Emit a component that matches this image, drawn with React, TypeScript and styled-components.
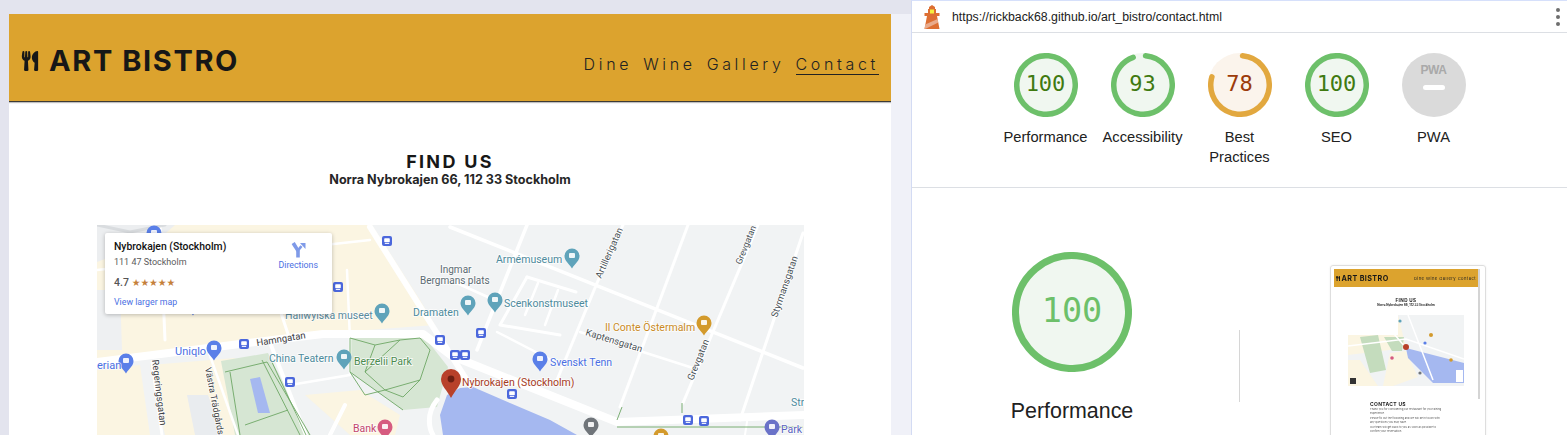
import React from "react";
import styled, { createGlobalStyle } from "styled-components";
import { FaUtensils } from "react-icons/fa";

const Global = createGlobalStyle`
  html, body { margin: 0; padding: 0; width: 1567px; height: 435px; overflow: hidden; background: #e3e4ee; }
  #root { width: 1567px; height: 435px; overflow: hidden; }
  * { box-sizing: border-box; }
`;

const Page = styled.div`
  display: flex;
  width: 1567px;
  height: 435px;
  overflow: hidden;
`;
const Browser = styled.div`
  display: flex;
  flex: 0 0 911px;
  height: 435px;
  padding: 14px 0 0 9px;
  background: #e3e4ee;
`;
const Site = styled.main`
  flex: 0 0 882px;
  background: #fff;
  overflow: hidden;
  font-family: Inter, "Liberation Sans", sans-serif;
`;
const Gutter = styled.div`
  flex: 1;
  background: #f0f1f8;
`;
const SiteHeader = styled.header`
  display: flex;
  justify-content: space-between;
  height: 88px;
  padding: 0 12px;
  background: #dca32e;
  border-bottom: 1px solid #3c3a35;
  box-shadow: 0 1px 1px rgba(0, 0, 0, 0.25);
`;
const Brand = styled.h1`
  display: flex;
  align-items: center;
  gap: 10px;
  margin: 0;
  height: 92px;
  font-size: 29px;
  font-weight: 700;
  letter-spacing: 1.6px;
  color: #171717;
  white-space: nowrap;
  svg { width: 18px; height: 20px; margin-top: 2px; }
`;
const Nav = styled.nav`
  display: flex;
  gap: 11px;
  align-items: flex-start;
  padding-top: 41px;
`;
const NavLink = styled.a<{ $active?: boolean }>`
  font-size: 16px;
  font-weight: 300;
  letter-spacing: 3.65px;
  line-height: 19px;
  height: 20px;
  color: #222;
  border-bottom: 1px solid ${(p) => (p.$active ? "#222" : "transparent")};
`;
const Intro = styled.section`
  padding-top: 50px;
  text-align: center;
  color: #171717;
  height: 123px;
`;
const Title = styled.h2`
  margin: 0;
  font-size: 18px;
  line-height: 20px;
  font-weight: 700;
  letter-spacing: 2.3px;
`;
const Address = styled.p`
  margin: 0;
  font-size: 12.6px;
  line-height: 16px;
  font-weight: 700;
  color: #262626;
`;
const MapFrame = styled.div`
  position: relative;
  width: 707px;
  height: 210px;
  margin-left: 88px;
  overflow: hidden;
  background: #f1f3f4;
  font-family: Roboto, "Liberation Sans", sans-serif;
`;
const MapSvg = styled.svg`
  display: block;
  width: 707px;
  height: 210px;
`;
const Label = styled.text<{ $c?: string; $s?: number; $w?: number }>`
  font-family: Roboto, "Liberation Sans", sans-serif;
  font-size: ${(p) => p.$s ?? 11}px;
  font-weight: ${(p) => p.$w ?? 400};
  fill: ${(p) => p.$c ?? "#5b6a72"};
  paint-order: stroke;
  stroke: rgba(255, 255, 255, 0.85);
  stroke-width: 1.5px;
`;
const InfoCard = styled.aside`
  position: absolute;
  left: 8px;
  top: 8px;
  width: 227px;
  height: 81px;
  padding: 7px 14px 0 9px;
  display: flex;
  justify-content: space-between;
  background: #fff;
  box-shadow: 0 1px 4px rgba(0, 0, 0, 0.25);
  border-radius: 2px;
`;
const Place = styled.div`
  display: flex;
  flex-direction: column;
`;
const PlaceName = styled.strong`
  font-size: 10.4px;
  line-height: 13px;
  font-weight: 500;
  color: #111;
`;
const PlaceAddress = styled.span`
  font-size: 9px;
  line-height: 12px;
  margin-top: 3px;
  color: #5b5b5b;
`;
const Rating = styled.div`
  display: flex;
  align-items: center;
  gap: 3px;
  margin-top: 7px;
  height: 14px;
  font-size: 10.5px;
  font-weight: 500;
  color: #555;
`;
const Stars = styled.span`
  font-size: 9.8px;
  letter-spacing: -0.15px;
  color: #c5803a;
  font-family: "DejaVu Sans", sans-serif;
`;
const LargerMap = styled.a`
  margin-top: 7px;
  font-size: 8.8px;
  line-height: 12px;
  color: #4a6fe3;
`;
const Directions = styled.a`
  display: flex;
  flex-direction: column;
  align-items: center;
  gap: 2px;
  margin-top: 2px;
  font-size: 8.8px;
  color: #4a6fe3;
  svg { width: 16px; height: 16px; }
`;

const Report = styled.aside`
  flex: 1;
  height: 435px;
  display: flex;
  flex-direction: column;
  background: #fff;
  border-left: 1px solid #d3dbf3;
  border-top: 1px solid #d6e0fb;
  font-family: "Liberation Sans", Arial, sans-serif;
  overflow: hidden;
`;
const TopBar = styled.div`
  display: flex;
  align-items: center;
  height: 32px;
  flex: none;
  padding: 0 7px 0 12px;
  border-bottom: 1px solid #dcdfe4;
  svg { flex: none; }
`;
const Url = styled.span`
  flex: 1;
  margin-left: 12px;
  font-size: 12.3px;
  color: #212121;
`;
const Dots = styled.div`
  display: flex;
  flex-direction: column;
  gap: 3px;
`;
const Dot = styled.i`
  display: block;
  width: 4px;
  height: 4px;
  border-radius: 50%;
  background: #6e6e6e;
`;
const Summary = styled.div`
  flex: 0 0 155px;
  display: flex;
  justify-content: center;
  padding-top: 20px;
  border-bottom: 1px solid #dcdfe4;
`;
const GaugeItem = styled.div`
  width: 97px;
  display: flex;
  flex-direction: column;
  align-items: center;
`;
const GaugeLabel = styled.span`
  margin-top: 10px;
  width: 90px;
  font-size: 14.7px;
  line-height: 20px;
  text-align: center;
  color: #212121;
`;
const GaugeBox = styled.div<{ $size: number }>`
  position: relative;
  width: ${(p) => p.$size}px;
  height: ${(p) => p.$size}px;
  svg { display: block; }
`;
const GaugeValue = styled.span<{ $size: number; $color: string }>`
  position: absolute;
  inset: 0;
  display: flex;
  align-items: center;
  justify-content: center;
  padding-bottom: ${(p) => p.$size * 0.1}px;
  font-family: "DejaVu Sans Mono", "Liberation Mono", monospace;
  font-size: ${(p) => p.$size}px;
  color: ${(p) => p.$color};
`;
const PwaBadge = styled.div`
  width: 64px;
  height: 64px;
  border-radius: 50%;
  background: #dadada;
  display: flex;
  flex-direction: column;
  align-items: center;
  padding-top: 11px;
`;
const PwaMark = styled.span`
  font-size: 12px;
  line-height: 13px;
  font-weight: 700;
  letter-spacing: -0.5px;
  color: #a9a9a9;
`;
const PwaDash = styled.i`
  display: block;
  width: 22px;
  height: 5px;
  margin-top: 8px;
  border-radius: 3px;
  background: #fff;
`;
const Detail = styled.div`
  flex: 1;
  display: flex;
  padding-top: 64px;
`;
const BigScore = styled.div`
  flex: 0 0 320px;
  display: flex;
  flex-direction: column;
  align-items: center;
`;
const BigLabel = styled.span`
  margin-top: 26px;
  font-size: 21.4px;
  line-height: 26px;
  color: #212121;
`;
const Divider = styled.div`
  flex: none;
  width: 1px;
  height: 72px;
  margin: 78px 0 0 7px;
  background: #d6d6d6;
`;
const Shot = styled.div`
  flex: none;
  width: 156px;
  height: 190px;
  margin: 13px 0 0 90px;
  padding: 3px 7px 0 3px;
  position: relative;
  border: 1px solid #dedede;
  border-radius: 3px;
  box-shadow: 0 0 2px rgba(0, 0, 0, 0.08);
  font-family: Inter, "Liberation Sans", sans-serif;
  color: #222;
  filter: blur(0.4px);
  &::after {
    content: "";
    position: absolute;
    right: 5px;
    top: 3px;
    width: 2px;
    height: 130px;
    background: #d4d4d4;
  }
`;
const ShotHeader = styled.div`
  height: 18px;
  padding: 0 2px;
  display: flex;
  align-items: center;
  justify-content: space-between;
  background: #dca32e;
`;
const ShotBrand = styled.b`
  display: flex;
  align-items: center;
  gap: 1.5px;
  font-size: 7.2px;
  letter-spacing: 0.4px;
  color: #171717;
  svg { width: 4px; height: 5px; }
`;
const ShotNav = styled.span`
  font-size: 4.1px;
  letter-spacing: 0.45px;
  margin-top: 1px;
  color: #222;
`;
const ShotCenter = styled.div`
  padding-top: 11px;
  text-align: center;
  font-weight: 700;
`;
const ShotTitle = styled.div`
  font-size: 4.6px;
  line-height: 5px;
  letter-spacing: 0.4px;
`;
const ShotSub = styled.div`
  font-size: 3px;
  line-height: 4px;
`;
const ShotMap = styled.svg`
  display: block;
  width: 116px;
  height: 71px;
  margin: 8px 0 0 14px;
`;
const ShotBody = styled.div`
  margin: 15px 0 0 36px;
  width: 72px;
`;
const ShotHeading = styled.div`
  font-size: 5px;
  line-height: 7px;
  font-weight: 700;
  letter-spacing: 0.3px;
`;
const ShotLine = styled.div`
  font-size: 2.7px;
  line-height: 3.5px;
  margin-bottom: 2px;
  color: #555;
`;
const ShotField = styled.div`
  margin-top: 3px;
  padding: 1px 3px;
  height: 12px;
  font-size: 3px;
  font-weight: 700;
  border: 1px solid #eee;
`;

type PinProps = { x: number; y: number; c: string; r?: number };
const Pin = ({ x, y, c, r = 7.5 }: PinProps) => (
  <g transform={`translate(${x} ${y})`}>
    <path
      d={`M0 ${r * 1.65} C${-r * 0.45} ${r * 0.95} ${-r} ${r * 0.65} ${-r} 0 A${r} ${r} 0 1 1 ${r} 0 C${r} ${r * 0.65} ${r * 0.45} ${r * 0.95} 0 ${r * 1.65}Z`}
      fill={c}
    />
    <rect x={-3} y={-3} width={6} height={5} rx={1} fill="#fff" opacity={0.9} />
  </g>
);
const Stop = ({ x, y }: { x: number; y: number }) => (
  <g transform={`translate(${x} ${y})`}>
    <rect x={-5} y={-5} width={10} height={10} rx={2} fill="#4b67dc" />
    <rect x={-2.8} y={-2.8} width={5.6} height={4} rx={0.8} fill="#fff" />
    <rect x={-2.2} y={2} width={4.4} height={0.9} fill="#fff" />
  </g>
);

const thin: [string, number][] = [
  ["M450 227 L803 368", 3.5],
  ["M370 227 L433 327 L470 385", 6],
  ["M527 225 L477 350", 3.5],
  ["M623 225 L597 283 L557 380", 3],
  ["M688 225 L620 407", 3],
  ["M758 225 L683 403", 3],
  ["M803 233 L740 420", 3],
  ["M580 332 L643 352 L693 368", 2.5],
  ["M450 280 L490 298", 2.5],
  ["M497 332 L557 363", 2.5],
  ["M527 277 L576 292", 3],
  ["M527 277 L500 325 L560 335", 3],
  ["M538 283 L525 315", 2.5],
  ["M558 290 L545 325", 2.5],
  ["M160 225 L165 340", 3],
  ["M152 362 L162 435", 3],
  ["M208 350 L238 435", 2.5],
  ["M269 340 L306 435", 4],
  ["M97 270 L370 240", 2.5],
  ["M280 310 L290 340", 3],
  ["M347 270 L350 340", 2.5],
  ["M290 385 L350 375 L350 340", 2.5],
  ["M345 405 L330 435", 4],
  ["M745 435 L748 415", 2],
];
const parkPaths = [
  "M225 372 L267 362 L310 435",
  "M262 360 L300 435",
  "M270 358 L306 435",
  "M245 425 L288 410",
  "M230 372 L240 435",
  "M350 338 L375 345 L400 340 L420 338 L430 350 L420 380 L403 397 L385 390 L365 395 L350 372 Z",
  "M375 345 L365 372 L385 390 L420 380 M365 372 L400 340",
  "M350 372 L403 410",
  "M617 427 L803 427",
  "M617 420 L622 407",
  "M682 413 L682 403",
];

const MapArt = () => (
  <MapSvg viewBox="97 225 707 210" aria-label="Map">
    <rect x="97" y="225" width="707" height="210" fill="#f1f3f4" />
    <path d="M97 225 H372 L420 300 L435 325 L300 335 L100 360 H97Z" fill="#fbf5e2" />
    <path d="M97 225 H175 L160 238 L97 262Z" fill="#eceef0" />
    <path d="M120 290 L97 290 L97 350 L122 350Z" fill="#eef0f2" />
    <path d="M150 365 L235 358 L250 435 H165Z" fill="#fbf5e2" />
    <path d="M97 370 L140 365 L150 435 H97Z" fill="#fbf5e2" />
    <path d="M305 395 L360 390 L400 415 L395 435 H350Z" fill="#fbf5e2" />
    <path d="M187 395 H208 L222 435 H195Z" fill="#e9ecef" />
    <path d="M221 361 L268 353 L310 435 H235Z" fill="#d6e6d3" />
    <path d="M350 337 L423 335 L448 367 L437 407 L403 410 L350 372Z" fill="#d6e6d3" />
    <path d="M250 379 L260 377 L270 413 L258 413Z" fill="#a5b8f0" />
    <path d="M443 435 L440 415 L447 395 L460 388 L473 387 L510 403 L550 420 L577 435Z" fill="#a5b8f0" />
    <g fill="none" stroke="#fff" strokeLinecap="round" strokeLinejoin="round">
      {thin.map(([d, w]) => (
        <path key={d} d={d} strokeWidth={w} />
      ))}
      <path d="M97 362 L240 344 L323 334 L423 334 L452 356 L617 422 L804 415" strokeWidth={8} />
      <path d="M97 225 L130 232 L165 225" strokeWidth={3} stroke="#d9dcdf" />
      <path d="M437 400 C425 415 430 430 433 435" strokeWidth={5} />
    </g>
    <g fill="none" stroke="#6ea765" strokeWidth={0.9}>
      {parkPaths.map((d) => (
        <path key={d} d={d} />
      ))}
    </g>
    <Label x={257} y={346} $s={9.5} $c="#3c4043" transform="rotate(-9 257 346)">Hamngatan</Label>
    <Label x={152} y={360} $s={9.5} $c="#3c4043" transform="rotate(83 152 360)">Regeringsgatan</Label>
    <Label x={205} y={368} $s={9} $c="#3c4043" transform="rotate(79 205 368)">Västra Trädgårds</Label>
    <Label x={601} y={279} $s={9.5} $c="#4b5358" transform="rotate(-66 601 279)">Artillerigatan</Label>
    <Label x={741} y={265} $s={9} $c="#4b5358" transform="rotate(-68 741 265)">Grevgatan</Label>
    <Label x={693} y={381} $s={9.5} $c="#4b5358" transform="rotate(-68 693 381)">Grevgatan</Label>
    <Label x={777} y={318} $s={9.5} $c="#4b5358" transform="rotate(-71 777 318)">Styrmansgatan</Label>
    <Label x={585} y={335} $s={9.5} $c="#4b5358" transform="rotate(17 585 335)">Kaptensgatan</Label>

    <Pin x={154} y={233} c="#5a7fe8" />
    <Pin x={193} y={303} c="#5a7fe8" />
    <Pin x={126} y={361} c="#5a7fe8" />
    <Label x={97} y={369} $c="#4a6fe3" $s={11}>erian</Label>
    <Pin x={214} y={348} c="#5a7fe8" />
    <Label x={175} y={355} $c="#4a6fe3" $s={11}>Uniqlo</Label>
    <Pin x={382} y={311} c="#5fa3ba" />
    <Label x={285} y={319} $c="#5a8a9c" $s={10.5}>Hallwylska museet</Label>
    <Pin x={344} y={357} c="#5fa3ba" />
    <Label x={269} y={362} $c="#4d8a9c" $s={10.5}>China Teatern</Label>
    <Label x={354} y={365} $c="#4b8a4e" $s={10.5}>Berzelii Park</Label>
    <Label x={413} y={316} $c="#4d8a9c" $s={10.5}>Dramaten</Label>
    <Pin x={468} y={303} c="#5fa3ba" />
    <Pin x={495} y={300} c="#5fa3ba" />
    <Label x={504} y={307} $c="#4d8a9c" $s={10.5}>Scenkonstmuseet</Label>
    <Pin x={572} y={256} c="#5fa3ba" />
    <Label x={496} y={263} $c="#4d8a9c" $s={10.5}>Armémuseum</Label>
    <Label x={440} y={273} $c="#5b6a72" $s={10}>Ingmar</Label>
    <Label x={420} y={284} $c="#5b6a72" $s={10}>Bergmans plats</Label>
    <Pin x={704} y={323} c="#d39a2c" />
    <Label x={605} y={331} $c="#c98a25" $s={10.5}>Il Conte Östermalm</Label>
    <Pin x={540} y={359} c="#5a7fe8" />
    <Label x={550} y={366} $c="#4a6fe3" $s={10.5}>Svenskt Tenn</Label>
    <Label x={462} y={386} $c="#a63a24" $s={10.5}>Nybrokajen (Stockholm)</Label>
    <Label x={353} y={432} $c="#c2456c" $s={10.5}>Bank</Label>
    <Pin x={385} y={427} c="#d65b80" />
    <Pin x={591} y={425} c="#70757a" />
    <Pin x={661} y={436} c="#d39a2c" />
    <Pin x={772} y={427} c="#6a72c8" />
    <Label x={781} y={433} $c="#5a62c0" $s={10.5}>Park</Label>
    <Label x={791} y={406} $c="#4d8a9c" $s={10.5}>Str</Label>
    <g>
      <path d="M451 398 C447 390 441 386 441 379 A10 10 0 1 1 461 379 C461 386 455 390 451 398Z" fill="#b8412a" />
      <circle cx={451} cy={379} r={3.4} fill="#6d1f12" />
    </g>
    {[
      [387, 241], [338, 287], [290, 382], [244, 344], [440, 340], [481, 333],
      [455, 355], [465, 355], [512, 394], [688, 420], [704, 421],
    ].map(([x, y]) => (
      <Stop key={`${x}-${y}`} x={x} y={y} />
    ))}
  </MapSvg>
);

const Gauge = ({ score, size, stroke, ring, fill, color, font }: {
  score: number; size: number; stroke: number; ring: string; fill: string; color: string; font: number;
}) => {
  const r = (size - stroke) / 2;
  const c = 2 * Math.PI * r;
  const full = score >= 100;
  return (
    <GaugeBox $size={size}>
      <svg width={size} height={size} viewBox={`0 0 ${size} ${size}`}>
        <circle cx={size / 2} cy={size / 2} r={size / 2} fill={fill} />
        <circle
          cx={size / 2}
          cy={size / 2}
          r={r}
          fill="none"
          stroke={ring}
          strokeWidth={stroke}
          strokeLinecap={full ? "butt" : "round"}
          strokeDasharray={`${(score / 100) * c} ${c}`}
          transform={`rotate(-85 ${size / 2} ${size / 2})`}
        />
      </svg>
      <GaugeValue $size={font} $color={color}>{score}</GaugeValue>
    </GaugeBox>
  );
};

const LighthouseIcon = () => (
  <svg width="16" height="24" viewBox="0 0 16 24" aria-hidden="true">
    <path d="M8 0 L11 2 V4 H12 V8 H15.5 V11 H13 L15.5 24 H.5 L3 11 H.5 V8 H4 V4 H5 V2Z" fill="#dd6f33" />
    <rect x="6" y="4.5" width="4" height="4" fill="#f7ef3e" />
    <path d="M13.6 14 L14.3 17.5 L1.6 23.8 H.5 L1.3 19.5Z" fill="#e9ab8c" />
  </svg>
);

const gauges = [
  { label: "Performance", score: 100 },
  { label: "Accessibility", score: 93 },
  { label: "Best Practices", score: 78 },
  { label: "SEO", score: 100 },
];

export default function App() {
  return (
    <>
      <Global />
      <Page>
        <Browser>
          <Site>
            <SiteHeader>
              <Brand><FaUtensils />ART BISTRO</Brand>
              <Nav>
                <NavLink>Dine</NavLink>
                <NavLink>Wine</NavLink>
                <NavLink>Gallery</NavLink>
                <NavLink $active>Contact</NavLink>
              </Nav>
            </SiteHeader>
            <Intro>
              <Title>FIND US</Title>
              <Address>Norra Nybrokajen 66, 112 33 Stockholm</Address>
            </Intro>
            <MapFrame>
              <MapArt />
              <InfoCard>
                <Place>
                  <PlaceName>Nybrokajen (Stockholm)</PlaceName>
                  <PlaceAddress>111 47 Stockholm</PlaceAddress>
                  <Rating>4.7 <Stars>★★★★★</Stars></Rating>
                  <LargerMap>View larger map</LargerMap>
                </Place>
                <Directions>
                  <svg viewBox="0 0 16 16" aria-hidden="true">
                    <path d="M8 15.5 V9.5 C8 7.5 6 6 3.2 1" fill="none" stroke="#7f9ae8" strokeWidth="3.6" />
                    <path d="M8 9.5 C8 7.5 9.5 6.5 11.6 4.2" fill="none" stroke="#7f9ae8" strokeWidth="2.6" />
                    <path d="M10 1 H15.5 V7Z" fill="#7f9ae8" />
                  </svg>
                  Directions
                </Directions>
              </InfoCard>
            </MapFrame>
          </Site>
          <Gutter />
        </Browser>
        <Report>
          <TopBar>
            <LighthouseIcon />
            <Url>https://rickback68.github.io/art_bistro/contact.html</Url>
            <Dots><Dot /><Dot /><Dot /></Dots>
          </TopBar>
          <Summary>
            {gauges.map((g) => {
              const warn = g.score < 90;
              return (
                <GaugeItem key={g.label}>
                  <Gauge
                    score={g.score}
                    size={64}
                    stroke={5.5}
                    ring={warn ? "#e2a83f" : "#6dc06a"}
                    fill={warn ? "#fbf4ec" : "#f0f7f0"}
                    color={warn ? "#9c3b0a" : "#3f7a10"}
                    font={22}
                  />
                  <GaugeLabel>{g.label}</GaugeLabel>
                </GaugeItem>
              );
            })}
            <GaugeItem>
              <PwaBadge><PwaMark>PWA</PwaMark><PwaDash /></PwaBadge>
              <GaugeLabel>PWA</GaugeLabel>
            </GaugeItem>
          </Summary>
          <Detail>
            <BigScore>
              <Gauge score={100} size={120} stroke={7} ring="#6dc06a" fill="#f0f7f0" color="#6dc06a" font={33.5} />
              <BigLabel>Performance</BigLabel>
            </BigScore>
            <Divider />
            <Shot>
              <ShotHeader>
                <ShotBrand><FaUtensils />ART BISTRO</ShotBrand>
                <ShotNav>Dine Wine Gallery Contact</ShotNav>
              </ShotHeader>
              <ShotCenter>
                <ShotTitle>FIND US</ShotTitle>
                <ShotSub>Norra Nybrokajen 66, 112 33 Stockholm</ShotSub>
              </ShotCenter>
              <ShotMap viewBox="0 0 116 71" aria-label="Map thumbnail">
                <rect width="116" height="71" fill="#f1f3f4" />
                <path d="M0 0 H50 L58 33 L0 40Z M0 45 H12 L30 71 H0Z M42 38 L58 36 L70 62 L45 71 H35Z" fill="#fbf5e2" />
                <path d="M12 22 L30 20 L38 55 L22 58Z M36 22 L56 22 L54 36 L44 36Z" fill="#c4dcbd" />
                <path d="M58 33 L116 48 V68 H85 L60 43Z" fill="#a5b8f0" />
                <path d="M0 31 L58 24 L116 44 M60 0 L85 65 M30 0 L58 33" fill="none" stroke="#fff" strokeWidth="1.5" />
                <rect width="50" height="20" fill="#fff" />
                <circle cx="58" cy="32" r="3" fill="#b8412a" />
                <rect x="108" y="55" width="7" height="12" fill="#fff" />
                <rect x="2" y="63" width="6" height="6" fill="#333" />
                <circle cx="83" cy="20" r="2" fill="#d39a2c" />
                <circle cx="77" cy="28" r="1.6" fill="#5a7fe8" />
                <circle cx="44" cy="43" r="1.8" fill="#d65b80" />
                <circle cx="72" cy="58" r="1.6" fill="#70757a" />
                <circle cx="103" cy="45" r="1.8" fill="#d39a2c" />
                <circle cx="52" cy="6" r="1.6" fill="#5fa3ba" />
              </ShotMap>
              <ShotBody>
                <ShotHeading>CONTACT US</ShotHeading>
                <ShotLine>Thank you for considering our restaurant for your dining experience.</ShotLine>
                <ShotLine>Please fill out the following and we will be in touch with any questions you may have.</ShotLine>
                <ShotLine>Our team will get back to you as soon as possible to confirm your reservation.</ShotLine>
                <ShotField>Name</ShotField>
              </ShotBody>
            </Shot>
          </Detail>
        </Report>
      </Page>
    </>
  );
}
